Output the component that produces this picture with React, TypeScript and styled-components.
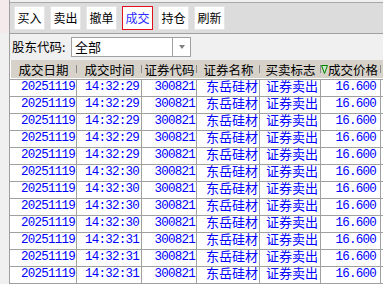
import React from 'react';
import styled, { createGlobalStyle } from 'styled-components';

const Global = createGlobalStyle`
  html, body { margin: 0; padding: 0; background: #f0f0f0; overflow: hidden; }
  body { font-family: "Noto Sans CJK SC", sans-serif; }
`;

const COLS = '67px 65px 55px 63px 61px 60px 60px';

const Root = styled.div`
  display: flex;
  width: 383px;
  height: 284px;
  overflow: hidden;
  background: #f0f0f0;
`;

const SideStrip = styled.div`
  flex: 0 0 9px;
  border-right: 1px solid #a0a0a0;
  background: linear-gradient(#f4eaeb 0, #f4eaeb 33px, #f0f0f0 33px);
`;

const Main = styled.div`
  flex: 1;
  min-width: 0;
  display: flex;
  flex-direction: column;
  overflow: hidden;
`;

const Toolbar = styled.div`
  margin-top: 2px;
  display: flex;
  gap: 5px;
  padding: 3px 4px;
  background: #dcdcdc;
  border-top: 1px solid #a8a8a8;
  border-bottom: 1px solid #a0a0a0;
`;

const ToolButton = styled.button<{ $active?: boolean }>`
  width: 31px;
  height: 24px;
  box-sizing: border-box;
  padding: 0;
  margin: 0;
  display: flex;
  align-items: center;
  justify-content: center;
  background: #ffffff;
  border: 1px solid ${(p) => (p.$active ? '#e0101c' : '#e6e6e6')};
  color: ${(p) => (p.$active ? '#2a2aff' : '#000000')};
  font-family: "Noto Sans CJK SC", sans-serif;
  font-size: 12px;
  line-height: 1;
`;

const FilterRow = styled.div`
  height: 28px;
  box-sizing: border-box;
  padding: 3px 0 0 2px;
  display: flex;
  align-items: flex-start;
`;

const FilterLabel = styled.span`
  width: 59px;
  height: 20px;
  line-height: 20px;
  font-size: 12.5px;
  color: #000;
`;

const Combo = styled.div`
  width: 120px;
  height: 20px;
  box-sizing: border-box;
  border: 1px solid #a0a0a0;
  background: #fff;
  display: flex;
`;

const ComboText = styled.span`
  flex: 1;
  padding-left: 3px;
  font-size: 13px;
  line-height: 18px;
  color: #000;
`;

const ComboButton = styled.span`
  width: 17px;
  border-left: 1px solid #a0a0a0;
  display: flex;
  align-items: center;
  justify-content: center;
`;

const Arrow = styled.span`
  width: 0;
  height: 0;
  border-left: 3.5px solid transparent;
  border-right: 3.5px solid transparent;
  border-top: 4px solid #808080;
`;

const Table = styled.div`
  display: flex;
  flex-direction: column;
`;

const HeaderRow = styled.div`
  display: grid;
  grid-template-columns: ${COLS};
  height: 20px;
  box-sizing: border-box;
  background: #d6d2ca;
  border-bottom: 1px solid #a0a0a0;
  box-shadow: inset 0 -1px 0 #ffffff, inset 1px 0 0 #ffffff;
`;

const HeaderCell = styled.div<{ $start?: boolean }>`
  position: relative;
  display: flex;
  align-items: center;
  justify-content: ${(p) => (p.$start ? 'flex-start' : 'center')};
  font-size: 12.5px;
  color: #000;
  white-space: nowrap;
  overflow: hidden;
  padding-bottom: 1px;
  &::after {
    content: '';
    position: absolute;
    right: 0;
    top: 5px;
    width: 1px;
    height: 8px;
    background: #8a8a8a;
  }
`;

const SortMark = styled.svg`
  flex: 0 0 7px;
`;

const BodyRow = styled.div`
  display: grid;
  grid-template-columns: ${COLS};
  height: 17px;
  box-sizing: border-box;
  background: #ffffff;
  border-bottom: 1px solid #a0a0a0;
`;

const Cell = styled.div<{ $num?: boolean; $pad?: number }>`
  display: flex;
  align-items: center;
  justify-content: flex-end;
  height: 16px;
  box-sizing: border-box;
  border-right: 1px solid #a0a0a0;
  padding-right: ${(p) => p.$pad ?? 2}px;
  padding-bottom: ${(p) => (p.$num ? 2 : 4)}px;
  color: #0000ff;
  font-family: ${(p) =>
    p.$num ? '"Liberation Mono", monospace' : '"Noto Sans CJK SC", sans-serif'};
  font-size: ${(p) => (p.$num ? '12.5px' : '13px')};
  letter-spacing: ${(p) => (p.$num ? '-0.75px' : '0')};
  line-height: 12px;
  white-space: nowrap;
`;

const buttons = ['买入', '卖出', '撤单', '成交', '持仓', '刷新'];

const times = [
  '14:32:29', '14:32:29', '14:32:29', '14:32:29', '14:32:29',
  '14:32:30', '14:32:30', '14:32:30', '14:32:30',
  '14:32:31', '14:32:31', '14:32:31',
];

const headers = ['成交日期', '成交时间', '证券代码', '证券名称', '买卖标志'];

export default function App() {
  return (
    <Root>
      <Global />
      <SideStrip />
      <Main>
        <Toolbar>
          {buttons.map((b) => (
            <ToolButton key={b} $active={b === '成交'}>
              {b}
            </ToolButton>
          ))}
        </Toolbar>
        <FilterRow>
          <FilterLabel>股东代码:</FilterLabel>
          <Combo>
            <ComboText>全部</ComboText>
            <ComboButton>
              <Arrow />
            </ComboButton>
          </Combo>
        </FilterRow>
        <Table>
          <HeaderRow>
            {headers.map((h) => (
              <HeaderCell key={h}>{h}</HeaderCell>
            ))}
            <HeaderCell $start>
              <SortMark width="7" height="9" viewBox="0 0 7 9">
                <polygon points="0.5,0.5 6.5,0.5 3.5,8.5" fill="#c8e6c8" stroke="#008000" strokeWidth="1" />
              </SortMark>
              成交价格
            </HeaderCell>
            <HeaderCell />
          </HeaderRow>
          {times.map((t, i) => (
            <BodyRow key={i}>
              <Cell $num $pad={1}>20251119</Cell>
              <Cell $num>{t}</Cell>
              <Cell $num $pad={1}>300821</Cell>
              <Cell $pad={1}>东岳硅材</Cell>
              <Cell>证券卖出</Cell>
              <Cell $num $pad={4}>16.600</Cell>
              <Cell />
            </BodyRow>
          ))}
        </Table>
      </Main>
    </Root>
  );
}
